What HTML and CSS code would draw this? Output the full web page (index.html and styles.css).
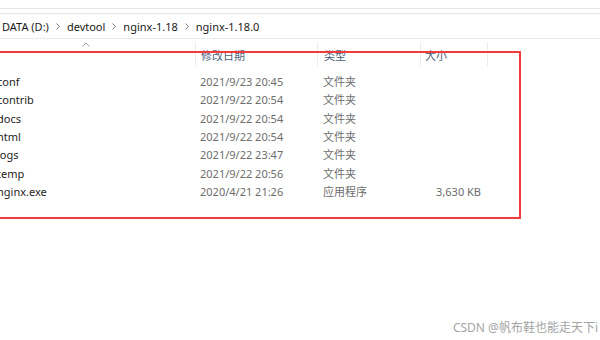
FILE: index.html
```html
<!DOCTYPE html>
<html lang="zh-CN">
<head>
    <meta charset="UTF-8">
    <title>nginx-1.18.0</title>
    <link rel="stylesheet" href="styles.css">
</head>
<body>
    <div class="toolbar"></div>

    <div class="address">
        <span class="crumb">DATA (D:)</span>
        <svg class="sep" width="4" height="7" viewBox="0 0 4 7"><path d="M0.5 0.5 L3.5 3.5 L0.5 6.5" fill="none" stroke="#7a7a7a" stroke-width="1"/></svg>
        <span class="crumb">devtool</span>
        <svg class="sep" width="4" height="7" viewBox="0 0 4 7"><path d="M0.5 0.5 L3.5 3.5 L0.5 6.5" fill="none" stroke="#7a7a7a" stroke-width="1"/></svg>
        <span class="crumb">nginx-1.18</span>
        <svg class="sep" width="4" height="7" viewBox="0 0 4 7"><path d="M0.5 0.5 L3.5 3.5 L0.5 6.5" fill="none" stroke="#7a7a7a" stroke-width="1"/></svg>
        <span class="crumb">nginx-1.18.0</span>
    </div>

    <div class="files">
        <div class="head">
            <div class="col name">
                <svg class="sort" width="8" height="5" viewBox="0 0 8 5"><path d="M0.5 4.5 L4 1 L7.5 4.5" fill="none" stroke="#9aa3ad" stroke-width="1"/></svg>
            </div>
            <div class="col date">修改日期</div>
            <div class="col type">类型</div>
            <div class="col size">大小</div>
            <div class="col rest"></div>
        </div>

        <div class="rows">
            <div class="row"><span class="name">conf</span><span class="date">2021/9/23 20:45</span><span class="type">文件夹</span><span class="size"></span></div>
            <div class="row"><span class="name">contrib</span><span class="date">2021/9/22 20:54</span><span class="type">文件夹</span><span class="size"></span></div>
            <div class="row"><span class="name">docs</span><span class="date">2021/9/22 20:54</span><span class="type">文件夹</span><span class="size"></span></div>
            <div class="row"><span class="name">html</span><span class="date">2021/9/22 20:54</span><span class="type">文件夹</span><span class="size"></span></div>
            <div class="row"><span class="name">logs</span><span class="date">2021/9/22 23:47</span><span class="type">文件夹</span><span class="size"></span></div>
            <div class="row"><span class="name">temp</span><span class="date">2021/9/22 20:56</span><span class="type">文件夹</span><span class="size"></span></div>
            <div class="row"><span class="name">nginx.exe</span><span class="date">2020/4/21 21:26</span><span class="type">应用程序</span><span class="size">3,630 KB</span></div>
        </div>
    </div>

    <div class="highlight"></div>
    <div class="watermark">CSDN @帆布鞋也能走天下i</div>
</body>
</html>
```

FILE: styles.css
```css
* {
    margin: 0;
    padding: 0;
    box-sizing: border-box;
}

body {
    width: 600px;
    height: 340px;
    overflow: hidden;
    position: relative;
    background-color: #fff;
    color: #1e1e1e;
    font-family: "Noto Sans", "Noto Sans CJK SC", sans-serif;
    font-size: 11px;
}

.toolbar {
    height: 9px;
    border-bottom: 1px solid #e6e6e6;
    margin-bottom: 4px;
}

.address {
    height: 26px;
    border-top: 1px solid #e3e3e3;
    border-bottom: 1px solid #ebebeb;
    display: flex;
    align-items: center;
    gap: 7px;
    padding-left: 2px;
    color: #1a1a1a;
    font-size: 11px;
}

.sep {
    margin-top: 1px;
}

.files {
    width: 600px;
}

.head {
    display: flex;
    height: 27px;
    padding-top: 3px;
}

.head .col {
    height: 24px;
    border-right: 1px solid #ececec;
    color: #4c607a;
    padding-left: 4px;
    padding-top: 5px;
    line-height: 18px;
}

.head .name {
    width: 196px;
    position: relative;
}

.sort {
    position: absolute;
    left: 82px;
    top: 0;
}

.head .date {
    width: 122px;
    padding-left: 5px;
}

.head .type {
    width: 103px;
    padding-left: 6px;
}

.head .size {
    width: 67px;
}

.head .rest {
    border-right: none;
}

.rows {
    padding-top: 7px;
}

.row {
    display: flex;
    height: 18.33px;
    line-height: 18.33px;
    white-space: nowrap;
}

.row .name {
    width: 203px;
    margin-left: -3px;
    color: #1e1e1e;
}

.row .date {
    width: 123px;
    color: #6d6d6d;
}

.row .type {
    width: 103px;
    color: #6d6d6d;
}

.row .size {
    width: 55px;
    text-align: right;
    color: #6d6d6d;
}

.highlight {
    position: absolute;
    left: -4px;
    top: 51px;
    width: 525px;
    height: 168px;
    border: 2px solid #f23c3c;
}

.watermark {
    position: absolute;
    right: 2px;
    bottom: 4px;
    color: #a4a4a4;
    font-size: 12px;
}
```
